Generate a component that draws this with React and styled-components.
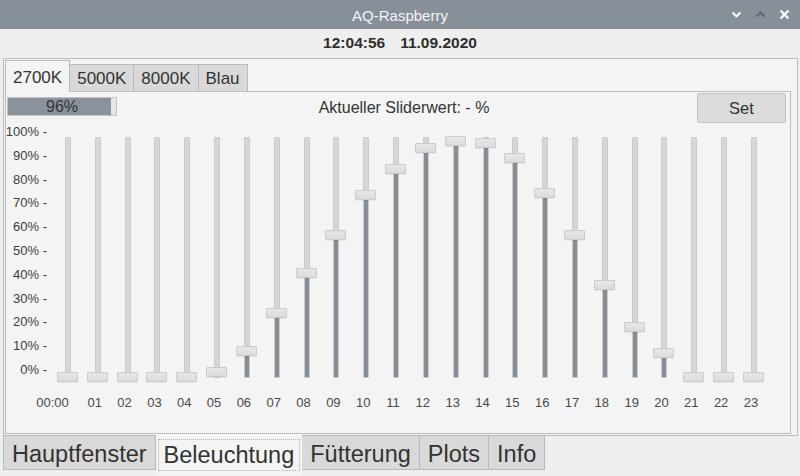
import React from 'react';
import styled, { createGlobalStyle } from 'styled-components';

const GlobalStyle = createGlobalStyle`
  html, body { margin: 0; padding: 0; }
  body {
    background: #efefef;
    font-family: "Liberation Sans", Arial, sans-serif;
    color: #333;
  }
`;

const HOURS = Array.from({ length: 24 }, (_, i) => (i === 0 ? '00:00' : String(i).padStart(2, '0')));
const LEVELS = [0, 0, 0, 0, 0, 2, 11, 27, 44, 60, 77, 88, 97, 100, 99, 93, 78, 60, 39, 21, 10, 0, 0, 0];
const TICKS = [100, 90, 80, 70, 60, 50, 40, 30, 20, 10, 0];
const STEP = 2.355;

const Window = styled.div`
  width: 800px;
  height: 476px;
  display: flex;
  flex-direction: column;
  background: #efefef;
  overflow: hidden;
`;

const TitleBar = styled.div`
  height: 29px;
  flex: none;
  display: grid;
  grid-template-columns: 1fr auto 1fr;
  align-items: center;
  background: #878f99;
  color: #f4f4f4;
  font-size: 15px;
`;

const Title = styled.div`
  grid-column: 2;
  padding-top: 1px;
`;

const TitleButtons = styled.div`
  grid-column: 3;
  justify-self: end;
  display: flex;
  padding-right: 4px;
`;

const TitleButton = styled.div`
  width: 24px;
  height: 29px;
  display: flex;
  align-items: center;
  justify-content: center;
`;

const DateRow = styled.div`
  height: 29px;
  flex: none;
  display: flex;
  align-items: center;
  justify-content: center;
  gap: 15px;
  font-weight: bold;
  font-size: 15.5px;
  color: #2e2e2e;
  padding-bottom: 2px;
  box-sizing: border-box;
`;

const OuterTabs = styled.div`
  display: flex;
  flex-direction: column;
  margin: 0 2px 0 3px;
`;

const OuterPane = styled.div`
  height: 378px;
  box-sizing: border-box;
  border: 1px solid #bdbdbd;
  background: #f4f4f4;
  padding: 1px 6px 1px 1px;
  display: flex;
  flex-direction: column;
`;

const InnerTabBar = styled.div`
  height: 31px;
  flex: none;
  display: flex;
  align-items: flex-end;
  position: relative;
  z-index: 1;
`;

const InnerTab = styled.div`
  box-sizing: border-box;
  padding: 0 7px;
  font-size: 17px;
  display: flex;
  align-items: center;
  border: 1px solid #b9b9b9;
  color: #333;
  ${(p) =>
    p.$active
      ? `
    height: 32px;
    margin-bottom: -1px;
    border-bottom: none;
    background: #f4f4f4;
    padding-top: 2px;
  `
      : `
    height: 27px;
    border-bottom: none;
    border-left: none;
    background: #d9d9d9;
    padding-top: 1px;
  `}
`;

const InnerPane = styled.div`
  flex: 1;
  border: 1px solid #bdbdbd;
  padding: 1px;
  display: flex;
  flex-direction: column;
`;

const ControlRow = styled.div`
  display: grid;
  grid-template-columns: 110px 1fr 89px;
  align-items: start;
  padding: 0 3px 0 0;
`;

const Progress = styled.div`
  margin-top: 4px;
  height: 19px;
  box-sizing: border-box;
  border: 1px solid #c4c4c4;
  background: linear-gradient(to right, #8a929b ${(p) => p.$value}%, #e6e6e6 ${(p) => p.$value}%);
  display: flex;
  align-items: center;
  justify-content: center;
  font-size: 16px;
  color: #333;
`;

const SliderValue = styled.div`
  text-align: center;
  font-size: 16px;
  line-height: 30px;
  color: #333;
  padding-right: 6px;
`;

const SetButton = styled.button`
  height: 30px;
  box-sizing: border-box;
  border: 1px solid #c4c4c4;
  border-radius: 2px;
  background: #dcdcdc;
  font-family: inherit;
  font-size: 16.5px;
  color: #333;
  padding: 0;
`;

const Chart = styled.div`
  margin-top: 1px;
  display: grid;
  grid-template-columns: 46px repeat(24, 29.83px);
`;

const Axis = styled.div`
  display: flex;
  flex-direction: column;
  align-items: flex-end;
  gap: 7.8px;
  padding-right: 6px;
`;

const Tick = styled.div`
  font-size: 13px;
  line-height: 16px;
  color: #3c3c3c;
  white-space: nowrap;
`;

const SliderCell = styled.div`
  display: flex;
  justify-content: center;
`;

const Slider = styled.div`
  position: relative;
  width: 22px;
  height: 246px;
  margin-top: 12px;
  display: flex;
  justify-content: center;
`;

const Track = styled.div`
  width: 6px;
  height: 241px;
  margin-top: 1px;
  box-sizing: border-box;
  border: 1px solid #cbcbcb;
  border-radius: 1px;
  background: #d6d6d6;
  display: flex;
  flex-direction: column;
  justify-content: flex-end;
  overflow: hidden;
`;

const Fill = styled.div`
  margin: 0 -1px -1px;
  background: #858d97;
  border: 1px solid #6e767f;
  border-bottom: none;
`;

const Handle = styled.div`
  position: absolute;
  left: 0;
  width: 21px;
  height: 10px;
  box-sizing: border-box;
  border: 1px solid #cbcbcb;
  border-radius: 1px;
  background: linear-gradient(#e6e6e6, #dcdcdc);
  box-shadow: 0 1px 0 rgba(0, 0, 0, 0.05);
`;

const HourCell = styled.div`
  display: flex;
  justify-content: ${(p) => (p.$wide ? 'flex-end' : 'center')};
  padding-right: ${(p) => (p.$wide ? '14px' : '6px')};
  margin-top: 13px;
  font-size: 13px;
  line-height: 16px;
  color: #4a4a4a;
  white-space: nowrap;
`;

const BottomTabBar = styled.div`
  display: flex;
  align-items: flex-start;
  margin-top: -1px;
`;

const BottomTab = styled.div`
  box-sizing: border-box;
  padding: 0 8px;
  font-size: 23.5px;
  display: flex;
  align-items: center;
  color: #333;
  ${(p) =>
    p.$active
      ? `
    height: 41px;
    margin-top: -1px;
    padding: 1px 2px 0;
    background: #f4f4f4;
    position: relative;
    z-index: 1;
  `
      : `
    height: 35px;
    border: 1px solid #b9b9b9;
    background: #d9d9d9;
    padding-top: 4px;
  `}
  & + & {
    border-left: ${(p) => (p.$active ? 'none' : '1px solid #b9b9b9')};
  }
`;

const FocusRing = styled.span`
  padding: 0 5px;
  line-height: 30px;
  border: 1px dotted #b0b0b0;
`;

function ChevronDown({ color }) {
  return (
    <svg width="11" height="7" viewBox="0 0 11 7">
      <polyline points="1.5,1.5 5.5,5.2 9.5,1.5" fill="none" stroke={color} strokeWidth="2.2" />
    </svg>
  );
}

function ChevronUp({ color }) {
  return (
    <svg width="11" height="7" viewBox="0 0 11 7">
      <polyline points="1.5,5.5 5.5,1.8 9.5,5.5" fill="none" stroke={color} strokeWidth="2.2" />
    </svg>
  );
}

function CloseIcon() {
  return (
    <svg width="11" height="11" viewBox="0 0 11 11">
      <path d="M1.5 1.5 L9.5 9.5 M9.5 1.5 L1.5 9.5" stroke="#fafafa" strokeWidth="2.3" />
    </svg>
  );
}

export default function App() {
  return (
    <Window>
      <GlobalStyle />
      <TitleBar>
        <Title>AQ-Raspberry</Title>
        <TitleButtons>
          <TitleButton>
            <ChevronDown color="#f6f6f6" />
          </TitleButton>
          <TitleButton>
            <ChevronUp color="#5f666e" />
          </TitleButton>
          <TitleButton>
            <CloseIcon />
          </TitleButton>
        </TitleButtons>
      </TitleBar>

      <DateRow>
        <span>12:04:56</span>
        <span>11.09.2020</span>
      </DateRow>

      <OuterTabs>
        <OuterPane>
          <InnerTabBar>
            <InnerTab $active>2700K</InnerTab>
            <InnerTab>5000K</InnerTab>
            <InnerTab>8000K</InnerTab>
            <InnerTab>Blau</InnerTab>
          </InnerTabBar>
          <InnerPane>
            <ControlRow>
              <Progress $value={95}>96%</Progress>
              <SliderValue>Aktueller Sliderwert: - %</SliderValue>
              <SetButton>Set</SetButton>
            </ControlRow>
            <Chart>
              <Axis>
                {TICKS.map((t) => (
                  <Tick key={t}>{t}% -</Tick>
                ))}
              </Axis>
              {LEVELS.map((v, i) => (
                <SliderCell key={i}>
                  <Slider>
                    <Track>
                      <Fill style={{ height: 1.5 + v * STEP }} />
                    </Track>
                    <Handle style={{ bottom: 0.5 + v * STEP }} />
                  </Slider>
                </SliderCell>
              ))}
              <div />
              {HOURS.map((h, i) => (
                <HourCell key={h} $wide={i === 0}>
                  {h}
                </HourCell>
              ))}
            </Chart>
          </InnerPane>
        </OuterPane>
        <BottomTabBar>
          <BottomTab>Hauptfenster</BottomTab>
          <BottomTab $active>
            <FocusRing>Beleuchtung</FocusRing>
          </BottomTab>
          <BottomTab>Fütterung</BottomTab>
          <BottomTab>Plots</BottomTab>
          <BottomTab>Info</BottomTab>
        </BottomTabBar>
      </OuterTabs>
    </Window>
  );
}
